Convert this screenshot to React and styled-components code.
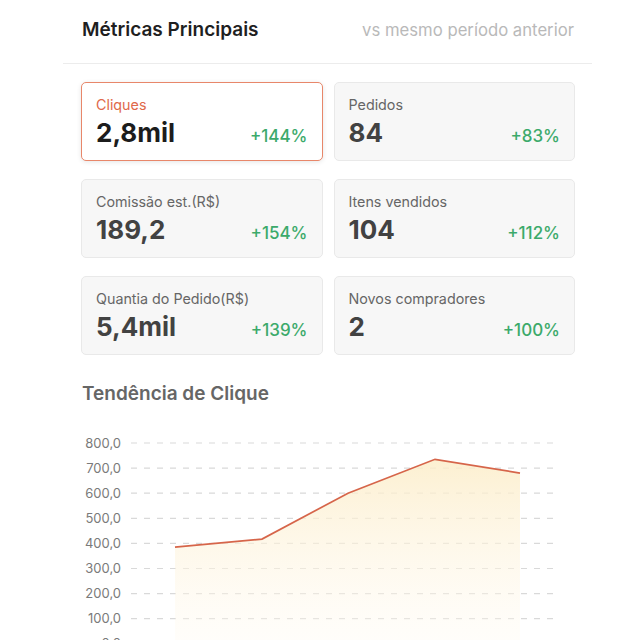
import React from 'react'
import styled, { createGlobalStyle } from 'styled-components'

const metrics = [
  { label: 'Cliques', value: '2,8mil', change: '+144%', active: true },
  { label: 'Pedidos', value: '84', change: '+83%' },
  { label: 'Comissão est.(R$)', value: '189,2', change: '+154%' },
  { label: 'Itens vendidos', value: '104', change: '+112%' },
  { label: 'Quantia do Pedido(R$)', value: '5,4mil', change: '+139%' },
  { label: 'Novos compradores', value: '2', change: '+100%' },
]

const ticks = [800, 700, 600, 500, 400, 300, 200, 100, 0]
const points = [385, 417, 600, 735, 680]

function TrendChart() {
  const top = 13
  const step = 25.1
  const yOf = (v) => top + ((800 - v) / 100) * step
  const xs = [112, 199, 285, 372, 457]
  const line = points.map((v, i) => `${xs[i]},${yOf(v).toFixed(1)}`).join(' ')
  const base = yOf(0)
  const area = `M${xs[0]},${base} L${line.split(' ').join(' L')} L${xs[4]},${base} Z`

  return (
    <svg width="529" height="230" viewBox="0 0 529 230">
      <defs>
        <linearGradient id="fill" x1="0" y1="0" x2="0" y2="1">
          <stop offset="0%" stopColor="#fcedc9" stopOpacity="0.85" />
          <stop offset="100%" stopColor="#fffaf0" stopOpacity="0.3" />
        </linearGradient>
      </defs>
      {ticks.map((t) => (
        <g key={t}>
          <text
            x="58"
            y={yOf(t) + 4.5}
            textAnchor="end"
            fontSize="13"
            fill="#7a7a7a"
            fontFamily="Inter, 'Noto Sans', sans-serif"
          >
            {t},0
          </text>
          <line
            x1="68"
            x2="497"
            y1={yOf(t)}
            y2={yOf(t)}
            stroke="#d9d9d9"
            strokeWidth="1.2"
            strokeDasharray="6 7"
          />
        </g>
      ))}
      <path d={area} fill="url(#fill)" />
      <polyline points={line} fill="none" stroke="#d6654a" strokeWidth="1.7" />
    </svg>
  )
}

function App() {
  return (
    <>
      <GlobalStyle />
      <Section>
        <Header>
          <Title>Métricas Principais</Title>
          <Subtitle>vs mesmo período anterior</Subtitle>
        </Header>
        <Grid>
          {metrics.map((m) => (
            <Card key={m.label} $active={m.active}>
              <Label $active={m.active}>{m.label}</Label>
              <Row>
                <Value $active={m.active}>{m.value}</Value>
                <Change>{m.change}</Change>
              </Row>
            </Card>
          ))}
        </Grid>
        <ChartTitle>Tendência de Clique</ChartTitle>
        <ChartWrap>
          <TrendChart />
        </ChartWrap>
      </Section>
    </>
  )
}

const GlobalStyle = createGlobalStyle`
body{
  margin: 0;
  background: #fff;
  font-family: Inter, "Noto Sans", sans-serif;
  overflow: hidden;
}
`

const Section = styled.div`
margin-left: 63px;
width: 529px;
`

const Header = styled.div`
display: flex;
justify-content: space-between;
align-items: center;
padding: 19px 18px 22px 19px;
line-height: 22px;
border-bottom: 1px solid #ececec;
`

const Title = styled.div`
font-size: 19px;
font-weight: 600;
color: #1f1f1f;
`

const Subtitle = styled.div`
font-size: 16.7px;
color: #b9b9b9;
`

const Grid = styled.div`
display: grid;
grid-template-columns: 1fr 1fr;
column-gap: 11px;
row-gap: 18px;
margin: 18px 17px 0 18px;
`

const Card = styled.div`
box-sizing: border-box;
height: 79px;
padding: 13px 14px 0 14px;
border-radius: 5px;
border: 1px solid ${p => p.$active ? '#e8876a' : '#e9e9e9'};
background: ${p => p.$active ? '#fff' : '#f7f7f7'};
box-shadow: ${p => p.$active ? '0 1px 5px rgba(0,0,0,0.1)' : 'none'};
`

const Label = styled.div`
font-size: 14.3px;
line-height: 18px;
color: ${p => p.$active ? '#e0694a' : '#666'};
`

const Row = styled.div`
display: flex;
justify-content: space-between;
align-items: baseline;
margin-top: 4px;
`

const Value = styled.div`
font-size: 26px;
line-height: 30px;
font-weight: 700;
color: ${p => p.$active ? '#1c1c1c' : '#424242'};
`

const Change = styled.div`
font-size: 17px;
font-weight: 500;
color: #3caa6b;
`

const ChartTitle = styled.div`
margin: 27px 0 0 19px;
font-size: 19px;
line-height: 24px;
font-weight: 600;
color: #666;
`

const ChartWrap = styled.div`
margin-top: 24px;
`

export default App
